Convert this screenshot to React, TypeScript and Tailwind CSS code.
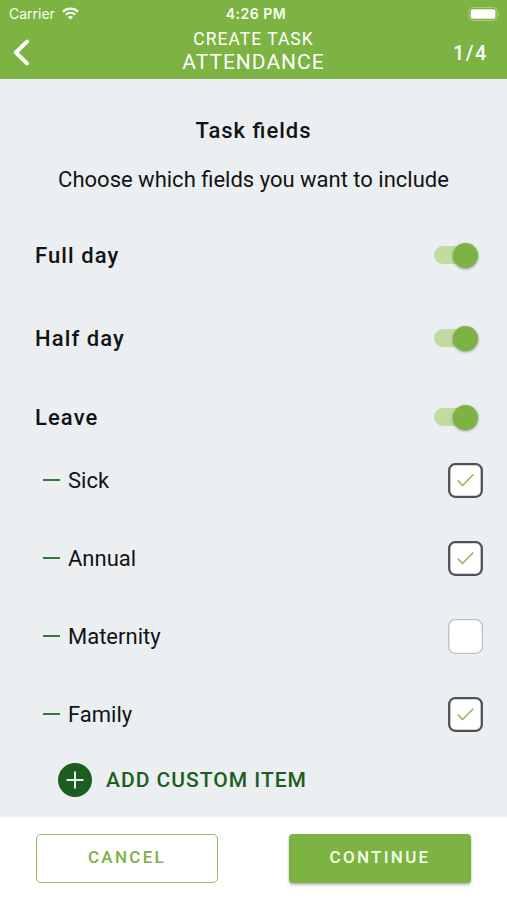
import { useState } from 'react';

function Toggle({ on, onChange, label }: { on: boolean; onChange: () => void; label: string }) {
  return (
    <button
      role="switch"
      aria-checked={on}
      aria-label={label}
      onClick={onChange}
      className={`flex h-[18px] w-[44px] items-center rounded-full ${on ? 'justify-end bg-[#c1dba3]' : 'justify-start bg-[#c4c8ca]'}`}
    >
      <span
        className={`size-[25px] shrink-0 rounded-full shadow-[0_1px_3px_rgba(0,0,0,0.4)] ${on ? 'bg-[#7cb342]' : 'bg-white'}`}
      />
    </button>
  );
}

function CheckBox({ checked, onChange, label }: { checked: boolean; onChange: () => void; label: string }) {
  return (
    <button
      role="checkbox"
      aria-checked={checked}
      aria-label={label}
      onClick={onChange}
      className="size-[35px]"
    >
      <svg width="35" height="35" viewBox="0 0 35 35" fill="none">
        {checked ? (
          <>
            <rect x="1.2" y="1.2" width="32.6" height="32.6" rx="6" fill="white" stroke="#505156" strokeWidth="2.3" />
            <path d="M9.8 17.5 L14.5 22.4 L25.4 11.4" stroke="#83b64c" strokeWidth="1.4" />
          </>
        ) : (
          <rect x="0.7" y="0.7" width="33.6" height="33.6" rx="6.5" fill="white" stroke="#bcbfc1" strokeWidth="1.3" />
        )}
      </svg>
    </button>
  );
}

const leaveTypes = ['Sick', 'Annual', 'Maternity', 'Family'];

export default function App() {
  const [fields, setFields] = useState<Record<string, boolean>>({
    'Full day': true,
    'Half day': true,
    Leave: true,
    Sick: true,
    Annual: true,
    Maternity: false,
    Family: true,
  });
  const flip = (name: string) => setFields((f) => ({ ...f, [name]: !f[name] }));

  return (
    <div className="flex h-[900px] w-[507px] flex-col overflow-hidden bg-[#ebeff2] font-[Roboto,sans-serif] text-[#121315]">
      <header className="h-[79px] shrink-0 bg-[#7cb342] text-white">
        <div className="grid h-[27px] grid-cols-3 items-center pr-[7px] pl-[9px] text-[#f8fff0]">
          <div className="flex items-center gap-[7px] font-[Inter,sans-serif] text-[14px]">
            <span>Carrier</span>
            <svg width="17" height="13" viewBox="0 0 17 13" fill="none" stroke="currentColor" strokeWidth="2.2">
              <path d="M0.9 4.6 C5.1 0.5 11.9 0.5 16.1 4.6" />
              <path d="M3.8 7.6 C6.4 5.1 10.6 5.1 13.2 7.6" />
              <path d="M8.5 12.5 L5.9 9.9 C7.4 8.5 9.6 8.5 11.1 9.9 Z" fill="currentColor" stroke="none" />
            </svg>
          </div>
          <div className="pl-[3px] text-center font-[Inter,sans-serif] text-[14px] font-semibold tracking-[0.5px]">4:26 PM</div>
          <svg className="justify-self-end" width="32" height="14" viewBox="0 0 32 14" fill="none">
            <rect x="1" y="0.5" width="28" height="13" rx="3.5" stroke="#a9cd80" />
            <rect x="2.8" y="2.3" width="24.6" height="9.4" rx="1.8" fill="white" />
            <path d="M30.3 5 C31.8 5.5 31.8 8.5 30.3 9 Z" fill="#a9cd80" />
          </svg>
        </div>
        <div className="grid h-[52px] grid-cols-[100px_1fr_100px] items-center">
          <button aria-label="Back" className="pl-[13px]">
            <svg width="17" height="28" viewBox="0 0 17 28" fill="none" stroke="white" strokeWidth="4" strokeLinecap="round" strokeLinejoin="round">
              <path d="M14 2.6 L2.8 13.5 L14 24.4" />
            </svg>
          </button>
          <h1 className="flex flex-col items-center pb-[4px]">
            <span className="text-[17.5px] leading-[23px] tracking-[1px]">CREATE TASK</span>
            <span className="text-[21px] leading-[23px] tracking-[1px]">ATTENDANCE</span>
          </h1>
          <span className="pr-[19px] text-right text-[20px] font-medium tracking-[1.5px]">1/4</span>
        </div>
      </header>

      <main className="h-[738px] shrink-0">
        <h2 className="mt-[38px] h-7 text-center text-[22px] leading-7 font-medium tracking-[1px] [font-feature-settings:'liga']">
          Task fields
        </h2>
        <p className="mt-[21px] h-7 text-center text-[22px] leading-7">Choose which fields you want to include</p>
        <div className="mt-[19px] pr-[29px] pl-[35px] text-[22px] font-medium tracking-[1.1px]">
          <div className="flex h-[84px] items-center justify-between">
            <span>Full day</span>
            <Toggle label="Full day" on={fields['Full day']} onChange={() => flip('Full day')} />
          </div>
          <div className="flex h-[82px] items-center justify-between">
            <span>Half day</span>
            <Toggle label="Half day" on={fields['Half day']} onChange={() => flip('Half day')} />
          </div>
          <div className="flex h-[62px] items-center justify-between pt-[14px]">
            <span>Leave</span>
            <Toggle label="Leave" on={fields.Leave} onChange={() => flip('Leave')} />
          </div>
        </div>
        <ul className="pr-[24px] pl-[43px] text-[22px]">
          {leaveTypes.map((name) => (
            <li key={name} className="flex h-[78px] items-center">
              <span className="mr-[8px] h-[2px] w-[17px] bg-[#2e7d32]" />
              <span className="flex-1">{name}</span>
              <CheckBox label={name} checked={fields[name]} onChange={() => flip(name)} />
            </li>
          ))}
        </ul>
        <button className="flex h-[54px] items-center gap-[14px] pl-[58px] text-[#1b5e20]">
          <svg width="34" height="34" viewBox="0 0 34 34">
            <circle cx="17" cy="17" r="17" fill="#1b5e20" />
            <path d="M8.5 17 H25.5 M17 8.5 V25.5" stroke="#ebeff2" strokeWidth="2" />
          </svg>
          <span className="pt-[2px] text-[21px] font-medium tracking-[1px]">ADD CUSTOM ITEM</span>
        </button>
      </main>

      <footer className="flex flex-1 items-start justify-between bg-white pt-[17px] pr-[36px] pl-[36px] text-[17px] font-medium tracking-[2.3px]">
        <button className="h-[49px] w-[182px] rounded-[5px] border border-[#8fc05c] pb-px text-[#7cb342]">CANCEL</button>
        <button className="h-[49px] w-[182px] rounded-[4px] bg-[#7cb342] pb-px text-[#f6ffec] shadow-[0_2px_3px_rgba(0,0,0,0.3)]">
          CONTINUE
        </button>
      </footer>
    </div>
  );
}
